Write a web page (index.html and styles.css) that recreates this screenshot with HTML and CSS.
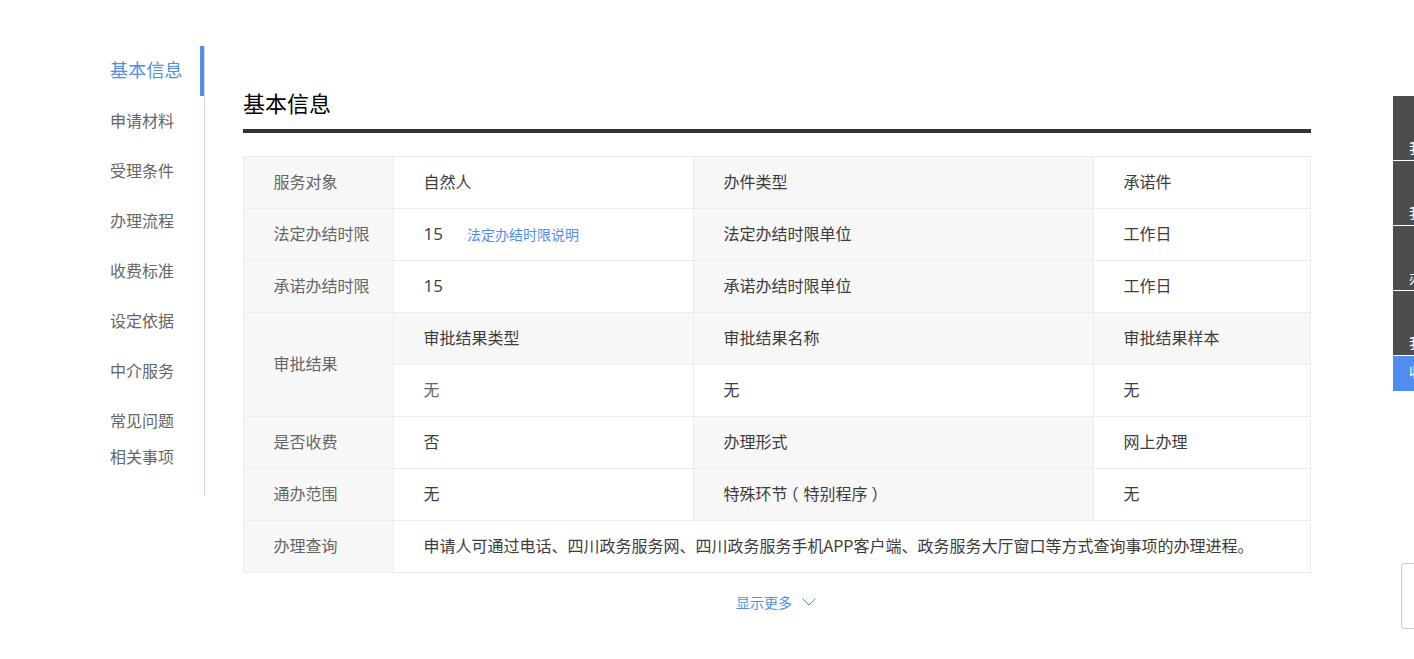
FILE: index.html
```html
<!DOCTYPE html>
<html lang="zh-CN">
<head>
<meta charset="utf-8">
<title>基本信息</title>
<link rel="stylesheet" href="styles.css">
</head>
<body>
<div class="page">
  <nav class="side-nav">
    <a class="nav-item active">基本信息</a>
    <a class="nav-item">申请材料</a>
    <a class="nav-item">受理条件</a>
    <a class="nav-item">办理流程</a>
    <a class="nav-item">收费标准</a>
    <a class="nav-item">设定依据</a>
    <a class="nav-item">中介服务</a>
    <a class="nav-item">常见问题</a>
    <a class="nav-item short">相关事项</a>
  </nav>
  <main class="content">
    <h2 class="title">基本信息</h2>
    <table class="info">
      <colgroup><col class="c1"><col class="c2"><col class="c3"><col class="c4"></colgroup>
      <tr><th>服务对象</th><td>自然人</td><th class="dark">办件类型</th><td>承诺件</td></tr>
      <tr><th>法定办结时限</th><td><span class="num">15</span><a class="link">法定办结时限说明</a></td><th class="dark">法定办结时限单位</th><td>工作日</td></tr>
      <tr><th>承诺办结时限</th><td><span class="num">15</span></td><th class="dark">承诺办结时限单位</th><td>工作日</td></tr>
      <tr><th rowspan="2">审批结果</th><th class="dark">审批结果类型</th><th class="dark">审批结果名称</th><th class="dark">审批结果样本</th></tr>
      <tr><td class="soft">无</td><td>无</td><td>无</td></tr>
      <tr><th>是否收费</th><td>否</td><th class="dark">办理形式</th><td>网上办理</td></tr>
      <tr><th>通办范围</th><td>无</td><th class="dark">特殊环节<span class="lp">（</span>特别程序<span class="rp">）</span></th><td>无</td></tr>
      <tr><th>办理查询</th><td colspan="3">申请人可通过电话、四川政务服务网、四川政务服务手机APP客户端、政务服务大厅窗口等方式查询事项的办理进程。</td></tr>
    </table>
    <a class="more">显示更多
      <svg class="chev" width="14" height="8" viewBox="0 0 14 8"><path d="M.5.5 7 7 13.5.5" fill="none" stroke="#4f8ef0" stroke-width="1"/></svg>
    </a>
  </main>
</div>
<aside class="float-panel">
  <a class="float-item">我要咨询</a>
  <a class="float-item">我要投诉</a>
  <a class="float-item">办事指南</a>
  <a class="float-item">我要评价</a>
  <a class="float-item up">收起</a>
</aside>
<div class="corner-box"></div>
</body>
</html>
```
FILE: styles.css
```css
* { box-sizing: border-box; }
html, body { margin: 0; height: 659px; overflow: hidden; background: #fff; }
body { font-family: "Noto Sans CJK SC", "Liberation Sans", sans-serif; color: #333; }
.page { display: flex; width: 1414px; padding: 46px 0 0 110px; }
.side-nav { width: 95px; height: 450px; border-right: 1px solid #c9dcf8; display: flex; flex-direction: column; flex-shrink: 0; margin-right: 38px; }
.nav-item { display: block; height: 50px; line-height: 48px; font-size: 16px; color: #666; }
.nav-item.short { height: 36px; line-height: 20px; }
.nav-item.active { font-size: 18px; line-height: 47px; color: #4f8ef0; border-right: 4px solid #4f8ef0; letter-spacing: .2px; white-space: nowrap; }
.content { width: 1068px; flex-shrink: 0; }
.title { margin: 0; padding-top: 40px; height: 87px; border-bottom: 4px solid #333; font-size: 22px; line-height: 32px; font-weight: 400; color: #000; }
.info { width: 1067px; margin-top: 23px; border-collapse: collapse; table-layout: fixed; font-size: 16px; }
.c1 { width: 150px; } .c2 { width: 300px; } .c3 { width: 400px; } .c4 { width: 217px; }
.info th, .info td { height: 52px; padding: 0 0 4px 29.5px; border: 1px solid #ebebeb; font-weight: 400; text-align: left; }
.info th { background: #f7f7f7; color: #666; }
.info th.dark { color: #3c3c3c; }
.info td { color: #3c3c3c; }
.info td.soft { color: #666; }
.lp { display: inline-block; transform: translateX(-5px); }
.rp { display: inline-block; transform: translateX(4px); }
.num { font-family: "Open Sans", "Liberation Sans", sans-serif; font-size: 17px; }
.link { margin-left: 24px; font-size: 14px; color: #4f8ef0; }
.more { display: flex; justify-content: center; align-items: center; gap: 10px; margin-top: 18px; padding-right: 2px; font-size: 14px; line-height: 22px; color: #4f8ef0; }
.float-panel { position: fixed; left: 1393px; top: 96px; width: 80px; }
.float-item { display: block; height: 65px; border-bottom: 1px solid #fff; background: #4d4d4d; color: #fff; font-size: 14px; padding: 41px 0 0 16px; line-height: 20px; white-space: nowrap; }
.float-item.up { height: 35px; border: 0; background: #4f8ef0; padding-top: 5px; }
.corner-box { position: fixed; left: 1401px; top: 563px; width: 60px; height: 66px; border: 1px solid #ccc; border-radius: 4px; background: #fff; }
```
